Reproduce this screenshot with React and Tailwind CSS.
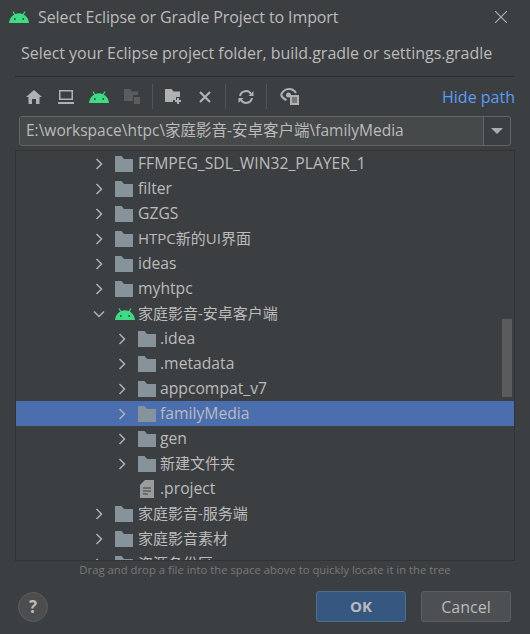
const font = { fontFamily: '"Open Sans", "Noto Sans CJK SC", sans-serif' };

function Android({ className }) {
    return (
        <svg viewBox="0 0 20 12" className={className}>
            <path d="M0 12C.3 8.200 2.300 5.100 5.200 3.500L3.500.7 4.400.2 6.200 3.100C7.300 2.600 8.600 2.300 10 2.300s2.700.3 3.800.8L15.600.2l.9.5-1.700 2.800c2.900 1.600 4.900 4.700 5.200 8.500Z" fill="#3ddc84" />
            <circle cx="5.800" cy="8" r=".9" fill="#3c3f41" />
            <circle cx="14.200" cy="8" r=".9" fill="#3c3f41" />
        </svg>
    );
}

function Folder() {
    return (
        <svg viewBox="0 0 18 16" className="w-[18px] h-4 shrink-0">
            <path d="M0 0h6.500l2.500 3h9v13H0Z" fill="#87939a" />
        </svg>
    );
}

function Chevron({ open }) {
    return (
        <svg viewBox="0 0 12 12" className="w-3 h-3 shrink-0" fill="none" stroke="#afb1b3" strokeWidth="1.500">
            {open ? <path d="M1 3.500l5 5 5-5" /> : <path d="M3.500 1l5 5-5 5" />}
        </svg>
    );
}

function FileIcon() {
    return (
        <svg viewBox="0 0 14 18" className="w-[14px] h-[18px] shrink-0">
            <path d="M5 0h9v18H0V5Z" fill="#9a9b9c" />
            <path d="M3 8h8M3 11h8M3 14h5" stroke="#3c3f41" strokeWidth="1" />
        </svg>
    );
}

const rows = [
    { name: "FFMPEG_SDL_WIN32_PLAYER_1", level: 0 },
    { name: "filter", level: 0 },
    { name: "GZGS", level: 0 },
    { name: "HTPC新的UI界面", level: 0, cjk: true },
    { name: "ideas", level: 0 },
    { name: "myhtpc", level: 0 },
    { name: "家庭影音-安卓客户端", level: 0, android: true, open: true, cjk: true },
    { name: ".idea", level: 1 },
    { name: ".metadata", level: 1 },
    { name: "appcompat_v7", level: 1 },
    { name: "familyMedia", level: 1, selected: true },
    { name: "gen", level: 1 },
    { name: "新建文件夹", level: 1, cjk: true },
    { name: ".project", level: 1, file: true },
    { name: "家庭影音-服务端", level: 0, cjk: true },
    { name: "家庭影音素材", level: 0, cjk: true },
    { name: "资源备份区", level: 0, cjk: true },
];

function TreeRow({ row }) {
    return (
        <div className={`h-[25px] flex items-center shrink-0 ${row.level === 1 ? "pl-[100px]" : "pl-[77px]"} ${row.selected ? "bg-[#4b6eaf]" : ""}`}>
            <div className="w-[22px] flex shrink-0">
                {!row.file && <Chevron open={row.open} />}
            </div>
            {row.android ? <Android className="w-[20px] h-3 shrink-0" /> : row.file ? <div className="w-[18px] flex justify-center"><FileIcon /></div> : <Folder />}
            <span className={`${row.android ? "ml-[3px]" : row.level === 1 ? "ml-1" : "ml-[5px]"} ${row.cjk ? "text-[15px]" : "text-[15.700px]"} leading-none text-[#bbbbbb] whitespace-nowrap`}>{row.name}</span>
        </div>
    );
}

function Toolbar() {
    return (
        <div className="h-[39px] flex items-center ml-[24px] mr-[15px]">
            <div className="w-5 flex justify-center">
                <svg viewBox="0 0 16 14" className="w-4 h-[14px]"><path d="M8 0l8 7h-2.500v7H10V9H6v5H2.500V7H0Z" fill="#afb1b3" /></svg>
            </div>
            <div className="w-5 flex justify-center ml-3">
                <svg viewBox="0 0 16 14" className="w-4 h-[14px]" fill="none" stroke="#afb1b3" strokeWidth="1.500"><path d="M1.750.75h12.500v8.500H1.750Z" /><path d="M0 13h16" strokeWidth="2" /></svg>
            </div>
            <div className="w-5 flex justify-center ml-[13px]">
                <Android className="w-5 h-3" />
            </div>
            <div className="w-5 flex justify-center ml-[13px]">
                <svg viewBox="0 0 16 15" className="w-4 h-[15px]"><path d="M0 0h6l2 2.500h6V6H9v6H0Z" fill="#5a5c5d" /><path d="M10 8h6v7h-6Z" fill="#5a5c5d" /></svg>
            </div>
            <div className="w-px h-[25px] bg-[#515355] ml-[10px]" />
            <div className="w-5 flex justify-center ml-[11px]">
                <svg viewBox="0 0 18 15" className="w-[18px] h-[15px]"><path d="M0 0h6.500l2 2.500H15V8h-4v3H8v2H0Z" fill="#afb1b3" /><path d="M13 9v6M10 12h6" stroke="#afb1b3" strokeWidth="2" /></svg>
            </div>
            <div className="w-5 flex justify-center ml-[11px]">
                <svg viewBox="0 0 12 12" className="w-3 h-3"><path d="M1 1l10 10M11 1L1 11" stroke="#afb1b3" strokeWidth="2.200" /></svg>
            </div>
            <div className="w-px h-[25px] bg-[#515355] ml-[10px]" />
            <div className="w-5 flex justify-center ml-[10px]">
                <svg viewBox="0 0 16 16" className="w-4 h-4" fill="none" stroke="#afb1b3" strokeWidth="2"><path d="M2 7A6 6 0 0 1 13 5" /><path d="M14 9A6 6 0 0 1 3 11" /><path d="M15.500 2v5h-5Z M.5 14V9h5Z" fill="#afb1b3" stroke="none" /></svg>
            </div>
            <div className="w-px h-[25px] bg-[#515355] ml-[10px]" />
            <div className="w-5 flex justify-center ml-[13px]">
                <svg viewBox="0 0 20 17" className="w-5 h-[17px]">
                    <path d="M1 7C3 2.500 6 1 9 1s5.500 1.500 7 4" fill="none" stroke="#afb1b3" strokeWidth="2" />
                    <path d="M1 7c1.200 2.500 3 4.200 5.500 5" fill="none" stroke="#afb1b3" strokeWidth="2" />
                    <circle cx="8.500" cy="7" r="2.500" fill="#afb1b3" />
                    <path d="M10 7h9v10h-9Z" fill="#afb1b3" />
                    <path d="M12 10h5M12 12h5M12 14h5" stroke="#3c3f41" strokeWidth="1" />
                </svg>
            </div>
            <span className="ml-auto text-[16px] text-[#589df6]">Hide path</span>
        </div>
    );
}

export default function App() {
    return (
        <div className="w-[530px] h-[634px] bg-[#3c3f41] flex flex-col overflow-hidden" style={font}>
            {/* Title bar */}
            <div className="h-[34px] flex items-center pl-[9px] pr-[23px]">
                <Android className="w-5 h-3" />
                <span className="ml-[9px] text-[16px] tracking-[-0.1px] text-[#bbbbbb] whitespace-nowrap">Select Eclipse or Gradle Project to Import</span>
                <svg viewBox="0 0 12 12" className="w-3 h-3 ml-auto"><path d="M0 0l12 12M12 0L0 12" stroke="#afb1b3" strokeWidth="1.100" /></svg>
            </div>

            <div className="h-[43px] flex items-center pb-1 ml-[15px] mr-[16px] pl-[6px] text-[16px] tracking-[-0.03px] text-[#bbbbbb] whitespace-nowrap border-b border-[#2b2b2b]">
                Select your Eclipse project folder, build.gradle or settings.gradle
            </div>

            <Toolbar />

            {/* Path combo box */}
            <div className="h-[30px] mx-[19px] flex rounded-[3px] border border-[#646464] overflow-hidden">
                <div className="flex-1 bg-[#45494a] flex items-center pl-[6px] text-[15.500px] text-[#bbbbbb] whitespace-nowrap">E:\workspace\htpc\家庭影音-安卓客户端\familyMedia</div>
                <div className="w-[27px] border-l border-[#646464] flex items-center justify-center">
                    <div className="w-0 h-0 border-x-[6px] border-x-transparent border-t-[6px] border-t-[#a9acae]" />
                </div>
            </div>

            {/* Tree */}
            <div className="relative h-[411px] mt-[4px] mx-[15px] border border-[#323232] flex flex-col overflow-hidden">
                {rows.map((row) => <TreeRow key={row.name} row={row} />)}
                <div className="absolute left-[486px] top-[168px] w-[10px] h-[78px] bg-[#595b5d]" />
            </div>

            <div className="h-[19px] flex items-center justify-center text-[11.300px] text-[#787878] whitespace-nowrap">
                Drag and drop a file into the space above to quickly locate it in the tree
            </div>

            {/* Footer */}
            <div className="flex items-center pl-[18px] pr-[19px] mt-[11px]">
                <div className="w-[30px] h-[30px] rounded-full border border-[#5a5d5f] bg-[#4b4d4f] flex items-center justify-center text-[17px] font-bold text-[#bbbbbb]">?</div>
                <button className="ml-auto w-[90px] h-[31px] rounded-[3px] border border-[#4c708c] bg-[#365880] text-[15px] font-bold text-[#bbbbbb]">OK</button>
                <button className="ml-[15px] w-[90px] h-[31px] rounded-[3px] border border-[#5e6060] bg-[#4c5052] text-[16px] text-[#bbbbbb]">Cancel</button>
            </div>
        </div>
    );
}
